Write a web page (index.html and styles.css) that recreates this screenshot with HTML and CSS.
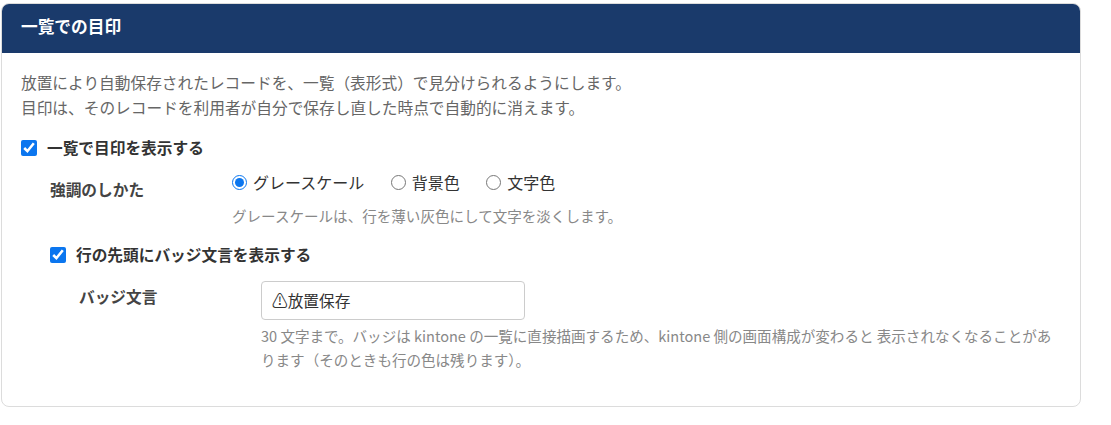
FILE: index.html
```html
<!DOCTYPE html>
<html lang="ja">
<head>
<meta charset="utf-8">
<title>一覧での目印</title>
<link rel="stylesheet" href="styles.css">
</head>
<body>
<section class="card">
  <h2 class="card-head">一覧での目印</h2>
  <div class="card-body">
    <p class="intro">放置により自動保存されたレコードを、一覧（表形式）で見分けられるようにします。<br>目印は、そのレコードを利用者が自分で保存し直した時点で自動的に消えます。</p>
    <label class="check"><input type="checkbox" checked><span>一覧で目印を表示する</span></label>
    <div class="indent">
      <div class="row">
        <div class="row-label">強調のしかた</div>
        <div class="row-field">
          <div class="radios">
            <label class="radio"><input type="radio" name="m" checked><span>グレースケール</span></label>
            <label class="radio"><input type="radio" name="m"><span>背景色</span></label>
            <label class="radio"><input type="radio" name="m"><span>文字色</span></label>
          </div>
          <p class="hint hint-radio">グレースケールは、行を薄い灰色にして文字を淡くします。</p>
        </div>
      </div>
      <label class="check check-sub"><input type="checkbox" checked><span>行の先頭にバッジ文言を表示する</span></label>
      <div class="indent">
        <div class="row">
          <div class="row-label badge-label">バッジ文言</div>
          <div class="row-field">
            <input class="text" type="text" value="⚠放置保存">
            <p class="hint hint-text">30 文字まで。バッジは kintone の一覧に直接描画するため、kintone 側の画面構成が変わると 表示されなくなることがあります（そのときも行の色は残ります）。</p>
          </div>
        </div>
      </div>
    </div>
  </div>
</section>
</body>
</html>
```

FILE: styles.css
```css
* { box-sizing: border-box; }
html, body { margin: 0; background: #fff; }
body {
  padding: 3px 30px 0 1px;
  font-family: "Noto Sans CJK JP", "Noto Sans", sans-serif;
  color: #333;
}
.card {
  width: 1080px;
  height: 404px;
  border: 1px solid #dcdcdc;
  border-radius: 8px;
  overflow: hidden;
}
.card-head {
  margin: 0;
  height: 49px;
  padding: 0 19px;
  background: #1a3a6b;
  color: #fff;
  font-size: 16.7px;
  font-weight: 700;
  line-height: 45px;
}
.card-body { padding: 17px 19px 0 19px; }
.intro {
  margin: 0;
  font-size: 15.7px;
  line-height: 25px;
  color: #666;
}
.check {
  display: flex;
  align-items: center;
  gap: 10px;
  font-size: 15.7px;
  font-weight: 700;
  line-height: 24px;
  margin-top: 16px;
}
.check input {
  margin: 0;
  width: 16px;
  height: 16px;
  accent-color: #0b76ef;
}
.indent { padding-left: 29px; }
.row { display: flex; }
.indent > .row { margin-top: 9px; }
.indent .indent > .row { margin-top: 14px; }
.row-label {
  width: 182px;
  flex: none;
  font-size: 15.7px;
  font-weight: 700;
  line-height: 24px;
  padding-top: 9px;
  color: #444;
}
.row-field { flex: 1; min-width: 0; }
.radios { display: flex; height: 24px; margin-top: 1px; }
.radio {
  display: flex;
  align-items: center;
  gap: 6px;
  margin-right: 26.5px;
  font-size: 16px;
  line-height: 24px;
}
.radio input {
  margin: 0;
  width: 15px;
  height: 15px;
  accent-color: #0b76ef;
}
.hint {
  margin: 0;
  font-size: 14.55px;
  line-height: 24px;
  color: #888;
}
.hint-radio { margin-top: 10px; }
.check-sub { margin-top: 15px; }
.badge-label { padding-top: 4px; }
.text {
  display: block;
  width: 264px;
  height: 39px;
  padding: 0 10px;
  border: 1px solid #ccc;
  border-radius: 4px;
  font: inherit;
  font-size: 15.7px;
  color: #333;
  background: #fff;
}
.hint-text { margin-top: 4px; }
```
